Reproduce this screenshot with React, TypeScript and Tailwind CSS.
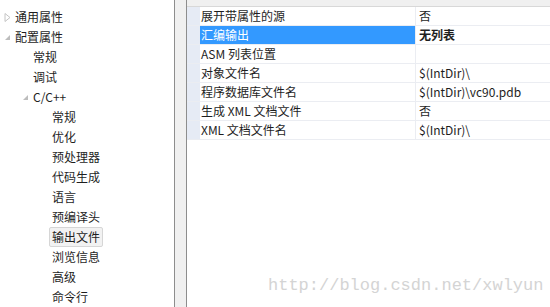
const font = "font-['Noto_Sans_CJK_SC','Noto_Sans',sans-serif]";

type Node = { label: string; level: number; arrow?: 'open' | 'closed'; selected?: boolean };

const tree: Node[] = [
  { label: '通用属性', level: 0, arrow: 'closed' },
  { label: '配置属性', level: 0, arrow: 'open' },
  { label: '常规', level: 1 },
  { label: '调试', level: 1 },
  { label: 'C/C++', level: 1, arrow: 'open' },
  { label: '常规', level: 2 },
  { label: '优化', level: 2 },
  { label: '预处理器', level: 2 },
  { label: '代码生成', level: 2 },
  { label: '语言', level: 2 },
  { label: '预编译头', level: 2 },
  { label: '输出文件', level: 2, selected: true },
  { label: '浏览信息', level: 2 },
  { label: '高级', level: 2 },
  { label: '命令行', level: 2 },
];

const props = [
  { name: '展开带属性的源', value: '否' },
  { name: '汇编输出', value: '无列表', selected: true },
  { name: 'ASM 列表位置', value: '' },
  { name: '对象文件名', value: '$(IntDir)\\' },
  { name: '程序数据库文件名', value: '$(IntDir)\\vc90.pdb' },
  { name: '生成 XML 文档文件', value: '否' },
  { name: 'XML 文档文件名', value: '$(IntDir)\\' },
];

function Arrow({ kind }: { kind: 'open' | 'closed' }) {
  if (kind === 'closed') {
    return (
      <svg width="7" height="9" viewBox="0 0 7 9">
        <path d="M1 0.5 L6 4.5 L1 8.5 Z" fill="none" stroke="#c4c4c4" strokeWidth="1" />
      </svg>
    );
  }
  return (
    <svg width="7" height="7" viewBox="0 0 7 7">
      <path d="M6 1 L6 6 L1 6 Z" fill="#bdbdbd" />
    </svg>
  );
}

export default function App() {
  return (
    <div className={`relative w-[550px] h-[307px] overflow-hidden bg-[#f0f0f0] flex text-[12px] text-[#1e1e1e] ${font}`}>
      {/* tree */}
      <div className="w-[175px] h-full bg-white border-r border-[#8d8d8d] pt-[7px]">
        {tree.map((n, i) => (
          <div key={i} className="h-[20px] flex items-center">
            <div className={`shrink-0 ${n.level === 0 ? 'w-[1px]' : n.level === 1 ? 'w-[19px]' : 'w-[38px]'}`} />
            <div className="w-[14px] shrink-0 flex items-center justify-start pl-[3px]">
              {n.arrow && <Arrow kind={n.arrow} />}
            </div>
            <span
              className={`leading-[18px] ${n.selected ? 'ml-[-3px] px-[2px] bg-[#f2f2f2] border border-[#d6d6d6] rounded-[2px]' : ''}`}
            >
              {n.label}
            </span>
          </div>
        ))}
      </div>

      {/* gap */}
      <div className="w-[11px] shrink-0" />

      {/* property grid */}
      <div className="flex-1 h-full bg-white border-l border-[#8d8d8d] flex flex-col">
        <div className="h-[7px] bg-[#f0f0f0] border-b border-[#d8d8d8]" />
        {props.map((p, i) => (
          <div key={i} className="h-[19px] flex border-b border-[#ebedf2]">
            <div className="w-[13px] shrink-0 bg-[#e6ebf5]" />
            <div
              className={`w-[216px] shrink-0 pl-[1px] flex items-center border-r border-[#ebedf2] ${p.selected ? 'bg-[#3399ff] text-white' : ''}`}
            >
              {p.name}
            </div>
            <div className={`flex-1 pl-[3px] flex items-center ${p.selected ? 'font-bold' : ''}`}>{p.value}</div>
          </div>
        ))}
      </div>

      {/* watermark */}
      <div className="absolute left-[268px] top-[275px] text-[17px] leading-[22px] text-[#d4d4d4] font-['Liberation_Mono',monospace]">
        http://blog.csdn.net/xwlyun
      </div>
    </div>
  );
}
